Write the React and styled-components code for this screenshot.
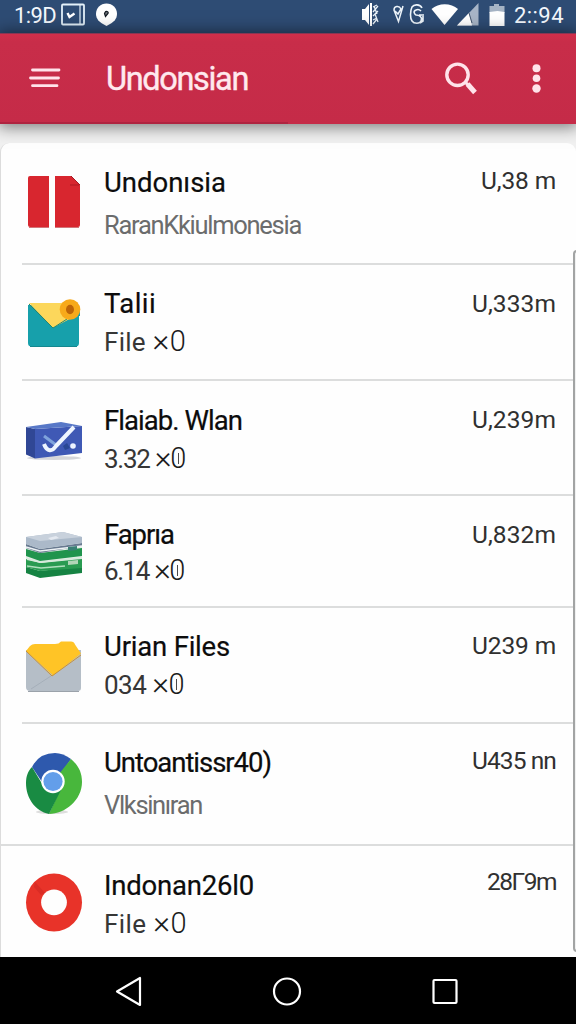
import React from 'react';
import styled, { createGlobalStyle } from 'styled-components';

const { useLayoutEffect, useRef, useState } = React;

const GlobalStyle = createGlobalStyle`
  * { box-sizing: border-box; }
  body {
    margin: 0;
    background: #f1f1f1;
    font-family: Roboto, "Liberation Sans", sans-serif;
  }
`;

const Screen = styled.div`
  display: flex;
  flex-direction: column;
  width: 576px;
  height: 1024px;
  overflow: hidden;
`;

const StatusBar = styled.div`
  display: flex;
  justify-content: space-between;
  flex: 0 0 33px;
  background: #2e4c74;
  color: #fff;
`;

const StatusGroup = styled.div`
  display: flex;
  align-items: flex-start;
  gap: ${({ $side }) => ($side === 'left' ? 4 : 8)}px;
  padding: ${({ $side }) => ($side === 'left' ? '0 0 0 14px' : '0 12px 0 0')};
`;

const Clock = styled.div`
  font-size: 22px;
  line-height: 31px;
  color: #f4f8fd;
`;

const AppBar = styled.header`
  display: flex;
  align-items: center;
  flex: 0 0 91px;
  padding: 0 28px 0 28px;
  position: relative;
  z-index: 2;
  background: linear-gradient(#d02e4a 0, #c82d49 8px, #c52b48 100%);
  box-shadow: 0 1px 15px 2px rgba(0, 0, 0, 0.5);
  border-top: 1px solid #883553;
`;

const TabLine = styled.div`
  position: absolute;
  left: 0;
  bottom: 0;
  width: 288px;
  height: 2px;
  background: #af2440;
`;

const Heading = styled.h1`
  margin: 0 auto 0 44px;
  font-size: 32.5px;
  line-height: 40px;
  font-weight: 400;
  color: #ffe9ee;
  -webkit-text-stroke: 0.4px #ffe9ee;
`;

const Body = styled.main`
  display: flex;
  flex: 1;
  padding-top: 19px;
  position: relative;
`;

const Card = styled.div`
  flex: 1;
  border-left: 1px solid #dcdcdc;
  border-radius: 9px 9px 0 0;
  background: #fefefe;
`;

const ScrollFrame = styled.div`
  position: absolute;
  top: 126px;
  right: -8px;
  width: 11px;
  height: 702px;
  border: 2px solid #a2a4a4;
  border-radius: 4px;
  background: #f0f1f1;
`;

const Row = styled.div`
  display: flex;
  height: ${({ $height }) => $height}px;
  padding-right: 20px;
  position: relative;

  &:not(:last-child)::after {
    content: '';
    position: absolute;
    left: ${({ $wide }) => ($wide ? 0 : 21)}px;
    right: 3px;
    bottom: 0;
    height: 2px;
    background: #dcdddd;
  }
`;

const IconCell = styled.div`
  flex: 0 0 103px;
  padding: ${({ $top }) => $top}px 0 0 23px;
`;

const TextCol = styled.div`
  display: flex;
  flex-direction: column;
  align-items: flex-start;
  gap: ${({ $gap }) => $gap}px;
  padding-top: ${({ $top }) => $top}px;
`;

const Line = styled.span`
  display: inline-block;
  white-space: pre;
  line-height: 32px;
  height: 32px;
`;

const Title = styled(Line)`
  font-size: 27.5px;
  color: #0c0c0c;
  -webkit-text-stroke: 0.2px #0c0c0c;
`;

const Subtitle = styled(Line)`
  font-size: ${({ $muted }) => ($muted ? 25.5 : 26)}px;
  color: ${({ $muted }) => ($muted ? '#6b6c6d' : '#363636')};
`;

const Meta = styled(Line)`
  margin: ${({ $top }) => $top}px 0 0 auto;
  font-size: 24.5px;
  color: #303030;
  align-self: flex-start;
`;

const Thin = styled.span`
  font-weight: 300;
  font-size: 32px;
  line-height: 20px;
  color: #1c1c1c;
`;

const Ring = styled.span`
  position: relative;
  font-weight: 300;
  font-size: 29px;
  line-height: 20px;
  color: #1c1c1c;

  &::after {
    content: '';
    display: ${({ $marked }) => ($marked ? 'block' : 'none')};
    position: absolute;
    left: 7.5px;
    top: 12px;
    width: 1px;
    height: 11px;
    background: #4a4a4a;
  }
`;

const NavBar = styled.nav`
  display: flex;
  align-items: center;
  justify-content: space-between;
  flex: 0 0 67px;
  padding: 3px 116px 0 114px;
  background: #000;
`;

// Spreads the letters so that the line takes up the given width.
function Fit({ as: Tag, width, children, ...rest }) {
  const ref = useRef(null);
  const [spacing, setSpacing] = useState(0);

  useLayoutEffect(() => {
    const natural = ref.current.getBoundingClientRect().width;
    setSpacing((width - natural) / ref.current.textContent.length);
  }, []);

  return (
    <Tag ref={ref} style={{ letterSpacing: `${spacing}px` }} {...rest}>
      {children}
    </Tag>
  );
}

function StatusLeftIcons() {
  return (
    <svg width="60" height="33" viewBox="60 0 60 33" fill="none">
      <rect x="62" y="4.5" width="22" height="20" rx="1" stroke="#e4f1fa" strokeWidth="1.8" />
      <path d="M80 5v19" stroke="#e4f1fa" strokeWidth="1.2" />
      <path d="M67.5 13l2 4 5-3.5" stroke="#fff" strokeWidth="2.4" />
      <path d="M106.5 3.500c6 0 10.500 4.500 10.500 10.500 0 5-3.500 8-7 10l-3.500 2-3.500-2c-3.500-2-7-5-7-10 0-6 4.500-10.500 10.500-10.500z" fill="#fff" />
      <path d="M105 12.500c1-2 4-1 3 1l-2.500 3-1-3z" fill="#6c7177" stroke="#141b24" strokeWidth="1.2" />
    </svg>
  );
}

function StatusRightIcons() {
  return (
    <svg width="146" height="33" viewBox="360 0 146 33" fill="none">
      <path d="M362 9h3l4-5v21l-4-5h-3z" fill="#fff" />
      <path d="M371 3v23" stroke="#fff" strokeWidth="2" />
      <path d="M373 7l4-2M373 12l5-6M373 16l5-5M373 20l4-2M373 24l4-5M375 14l3 8M374 6l3 8" stroke="#eaf2f8" strokeWidth="1.3" />
      <path d="M403 6l-4.500 15.500L394 10c0-4 5-5 7-1l-3 5-3-3" stroke="#edf4fa" strokeWidth="1.5" />
      <path d="M422 8c-2-4-8-4-10-1-2 4-2 11 0 14 2 3 8 3 9 0 2-4-2-6-5-6-2-1-3-4 0-5 2-1 4 0 5 1M419 15h5M423 16v5l-3 2" stroke="#edf4fa" strokeWidth="1.6" />
      <path d="M431.500 9c7-6.500 19.500-6.500 26.500 0l-13.500 16z" fill="#fff" />
      <path d="M457 25.500L478.500 3v22.500z" fill="#a8b5c7" />
      <path d="M457 25.500L469 13l3 12.500z" fill="#fff" />
      <path d="M469 13l3 10" stroke="#45566e" strokeWidth="1" />
      <path d="M494 4h5v2h5.500v7h-15V6h4.500z" fill="#a5b3c4" />
      <path d="M489.500 12l8-1 7 1v14h-15z" fill="#fff" />
    </svg>
  );
}

function MenuIcon() {
  return (
    <svg width="34" height="24" viewBox="28 66.5 34 24" stroke="#ffe3ea" strokeWidth="2.8" strokeLinecap="round">
      <path d="M32.500 69.500H59M30.500 77.500H58.500M32.500 85.200H57" />
    </svg>
  );
}

function BarActions() {
  return (
    <svg width="104" height="40" viewBox="444 59 104 40" fill="none">
      <circle cx="457.500" cy="74.800" r="10.700" stroke="#ffe3ea" strokeWidth="3.400" />
      <path d="M464.500 82l3.500 2.500" stroke="#ffe3ea" strokeWidth="3" />
      <path d="M467.500 84l7.500 8.500" stroke="#ffe3ea" strokeWidth="5" />
      <circle cx="536.500" cy="68.200" r="4" fill="#ffe3ea" />
      <circle cx="536.500" cy="78.300" r="3.800" fill="#ffe3ea" />
      <circle cx="536.500" cy="88.500" r="4.200" fill="#ffe3ea" />
    </svg>
  );
}

// Every list icon shares the same 60 x 68 box.
function IconBox({ children }) {
  return (
    <svg width="60" height="68" viewBox="0 0 60 68" fill="none">
      {children}
    </svg>
  );
}

function BookIcon() {
  return (
    <IconBox>
      <path d="M6 6h19v51H6a2 2 0 0 1-2-2V8a2 2 0 0 1 2-2z" fill="#d8262f" />
      <path d="M31 6h16l9 9v40a2 2 0 0 1-2 2H31z" fill="#d8262f" />
      <path d="M46 15h9" stroke="#ac1923" />
      <path d="M47 6l9 9" stroke="#a51922" />
      <path d="M5 57.500h20M31 57.500h24" stroke="#bd3b40" strokeWidth="0.700" />
    </IconBox>
  );
}

function MailIcon() {
  return (
    <IconBox>
      <path d="M4 12h51v38a3.500 3.500 0 0 1-3.500 3.500h-44A3.500 3.500 0 0 1 4 50z" fill="#17a0ab" />
      <path d="M5 10h48v13L29 35z" fill="#fcd75b" />
      <path d="M48 23h8v-6z" fill="#17a0ab" />
      <path d="M53 22L29 35l26-1z" fill="#17a0ab" />
      <path d="M5 11l24 24 14-9" stroke="#26866d" />
      <circle cx="46" cy="16.500" r="10.300" fill="#f7aa1b" />
      <ellipse cx="46" cy="16.500" rx="4" ry="4.700" fill="#bd6508" />
      <path d="M6 53.500h47" stroke="#148890" />
    </IconBox>
  );
}

function BoxIcon() {
  return (
    <IconBox>
      <ellipse cx="30" cy="43" rx="27" ry="2" fill="#d5d6da" />
      <path d="M2 12l9 2v29.500l-9-4z" fill="#304795" />
      <path d="M11 14l47-3v27l-47 5.500z" fill="#3f59b5" />
      <path d="M2 12l35-5 21 4-47 3z" fill="#5878c7" />
      <path d="M20 21l12 9" stroke="#7fa3dc" strokeWidth="3" />
      <path d="M20 29c3 8 8 8 12 2l18-19" stroke="#eef5ff" strokeWidth="4" strokeLinejoin="round" />
      <path d="M39 31l4-3 3 5-5 2z" fill="#294795" />
      <circle cx="49" cy="31" r="2.800" fill="#edf3ff" />
    </IconBox>
  );
}

function StackIcon() {
  return (
    <IconBox>
      <path d="M2 17v34l14 4 42-5V17z" fill="#e3efe7" />
      <path d="M2 45l14 4 42-5v7l-42 5-14-5z" fill="#168343" />
      <path d="M2 37l14 4 42-5v10l-42 3-14-4z" fill="#299b51" />
      <path d="M3 37l14 3 41-4" stroke="#d7eadc" strokeWidth="2" />
      <path d="M3 44l14 2 24-2" stroke="#afdfbd" strokeWidth="1.500" />
      <path d="M2 27l14 4 42-5v8l-42 5-14-5z" fill="#20944d" />
      <path d="M2 22l14 5 42-6v3l-42 7-14-5z" fill="#687990" />
      <path d="M2 25l14 4 42-5" stroke="#edf2f5" strokeWidth="1.500" />
      <path d="M2 15l37-5 19 5v6l-42 6-14-5z" fill="#abb9c9" />
      <path d="M2 15l37-5 19 5-42 4z" fill="#c8d1dc" />
      <path d="M24 16l8-2 3 2-8 2z" fill="#e4e9f0" />
      <path d="M44 25l9-1v4l-9 1z" fill="#398074" />
      <path d="M44 39l10-1v4l-10 1z" fill="#b1d5b7" />
    </IconBox>
  );
}

function FolderMailIcon() {
  return (
    <IconBox>
      <path d="M2 15h55v38a3 3 0 0 1-3 3H6a4 4 0 0 1-4-4z" fill="#b5bec7" />
      <path d="M2 16l4-5q2-2 5-2h20q4 0 6-2.500h10q3 0 4 3l6 9-28 22z" fill="#ffc426" />
      <path d="M2 16l26 25 29-21" stroke="#c6913b" />
      <path d="M27 41L7 54" stroke="#9da8b3" strokeWidth="0.700" />
      <path d="M4 56.500h51" stroke="#9ba2aa" />
    </IconBox>
  );
}

function BrowserIcon() {
  return (
    <IconBox>
      <ellipse cx="28" cy="63" rx="16" ry="2" fill="#dedede" />
      <path d="M8 18Q15 4 31 4q8 0 16 6L31 34 18 33z" fill="#2e59ad" />
      <path d="M47 10L35 25l1 16-11 24c16 0 33-14 33-32 0-10-4-17-11-23z" fill="#48b73c" />
      <path d="M8 18l12 20 17 3-12 24C11 62 2 49 2 34c0-7 2-12 6-16z" fill="#198b43" />
      <circle cx="29" cy="32.500" r="11.700" fill="#fff" />
      <circle cx="29" cy="32.500" r="9.600" fill="#639eea" />
    </IconBox>
  );
}

function RingIcon() {
  return (
    <IconBox>
      <ellipse cx="30" cy="33.500" rx="28" ry="29" fill="#e83329" />
      <path d="M11 13l10 11-4 2-7-8z" fill="#da2c25" />
      <circle cx="30" cy="33.300" r="12.900" fill="#fefefe" />
    </IconBox>
  );
}

const rows = [
  {
    height: 122, icon: BookIcon, iconTop: 27, top: 24, gap: 10, metaTop: 22,
    title: 'Undonısia', titleWidth: 122, sub: 'RaranKkiulmonesia', subWidth: 197, muted: true,
    meta: 'U,38 m', metaWidth: 75,
  },
  {
    height: 116, icon: MailIcon, iconTop: 28, top: 23, gap: 6, metaTop: 23,
    title: 'Talii', titleWidth: 52, sub: 'File ', times: true, subWidth: 82,
    meta: 'U,333m', metaWidth: 84,
  },
  {
    height: 115, icon: BoxIcon, iconTop: 34, top: 24, gap: 6, metaTop: 23,
    title: 'Flaiab. Wlan', titleWidth: 138, sub: '3.32 ', times: true, marked: true, subWidth: 81,
    meta: 'U,239m', metaWidth: 84,
  },
  {
    height: 112, icon: StackIcon, iconTop: 26, top: 23, gap: 4, metaTop: 23,
    title: 'Faprıa', titleWidth: 70, sub: '6.14 ', times: true, marked: true, subWidth: 80,
    meta: 'U,832m', metaWidth: 84,
  },
  {
    height: 116, icon: FolderMailIcon, iconTop: 27, top: 23, gap: 6, metaTop: 22,
    title: 'Urian Files', titleWidth: 126, sub: '034 ', times: true, marked: true, subWidth: 80,
    meta: 'U239 m', metaWidth: 84,
  },
  {
    height: 122, icon: BrowserIcon, iconTop: 25, top: 23, gap: 10, metaTop: 21, wide: true,
    title: 'Untoantissr40)', titleWidth: 167, sub: 'Vlksinıran', subWidth: 98, muted: true,
    meta: 'U435 nn', metaWidth: 84,
  },
  {
    height: 111, icon: RingIcon, iconTop: 23, top: 24, gap: 6, metaTop: 20,
    title: 'Indonan26l0', titleWidth: 150, sub: 'File ', times: true, subWidth: 83,
    meta: '28Γ9m', metaWidth: 69,
  },
];

function FileRow({ row }) {
  const Icon = row.icon;
  return (
    <Row $height={row.height} $wide={row.wide}>
      <IconCell $top={row.iconTop}>
        <Icon />
      </IconCell>
      <TextCol $top={row.top} $gap={row.gap}>
        <Fit as={Title} width={row.titleWidth}>{row.title}</Fit>
        <Fit as={Subtitle} $muted={row.muted} width={row.subWidth}>
          {row.sub}
          {row.times && (
            <>
              <Thin>×</Thin>
              <Ring $marked={row.marked}>0</Ring>
            </>
          )}
        </Fit>
      </TextCol>
      <Fit as={Meta} $top={row.metaTop} width={row.metaWidth}>{row.meta}</Fit>
    </Row>
  );
}

function App() {
  return (
    <Screen>
      <GlobalStyle />
      <StatusBar>
        <StatusGroup $side="left">
          <Fit as={Clock} width={42}>1:9D</Fit>
          <StatusLeftIcons />
        </StatusGroup>
        <StatusGroup $side="right">
          <StatusRightIcons />
          <Fit as={Clock} width={50}>2::94</Fit>
        </StatusGroup>
      </StatusBar>
      <AppBar>
        <MenuIcon />
        <Fit as={Heading} width={142}>Undonsian</Fit>
        <BarActions />
        <TabLine />
      </AppBar>
      <Body>
        <Card>
          {rows.map((row) => <FileRow key={row.title} row={row} />)}
        </Card>
        <ScrollFrame />
      </Body>
      <NavBar>
        <svg width="30" height="34" viewBox="0 0 30 34" fill="none" stroke="#fff" strokeWidth="2.200" strokeLinejoin="round">
          <path d="M3 16.500L26 3v27z" />
        </svg>
        <svg width="30" height="34" viewBox="0 0 30 34" fill="none" stroke="#fff" strokeWidth="2.200">
          <circle cx="15" cy="16.500" r="13" />
        </svg>
        <svg width="30" height="34" viewBox="0 0 30 34" fill="none" stroke="#fff" strokeWidth="2.200">
          <rect x="3.500" y="5" width="23" height="23" rx="1" />
        </svg>
      </NavBar>
    </Screen>
  );
}

export default App;
